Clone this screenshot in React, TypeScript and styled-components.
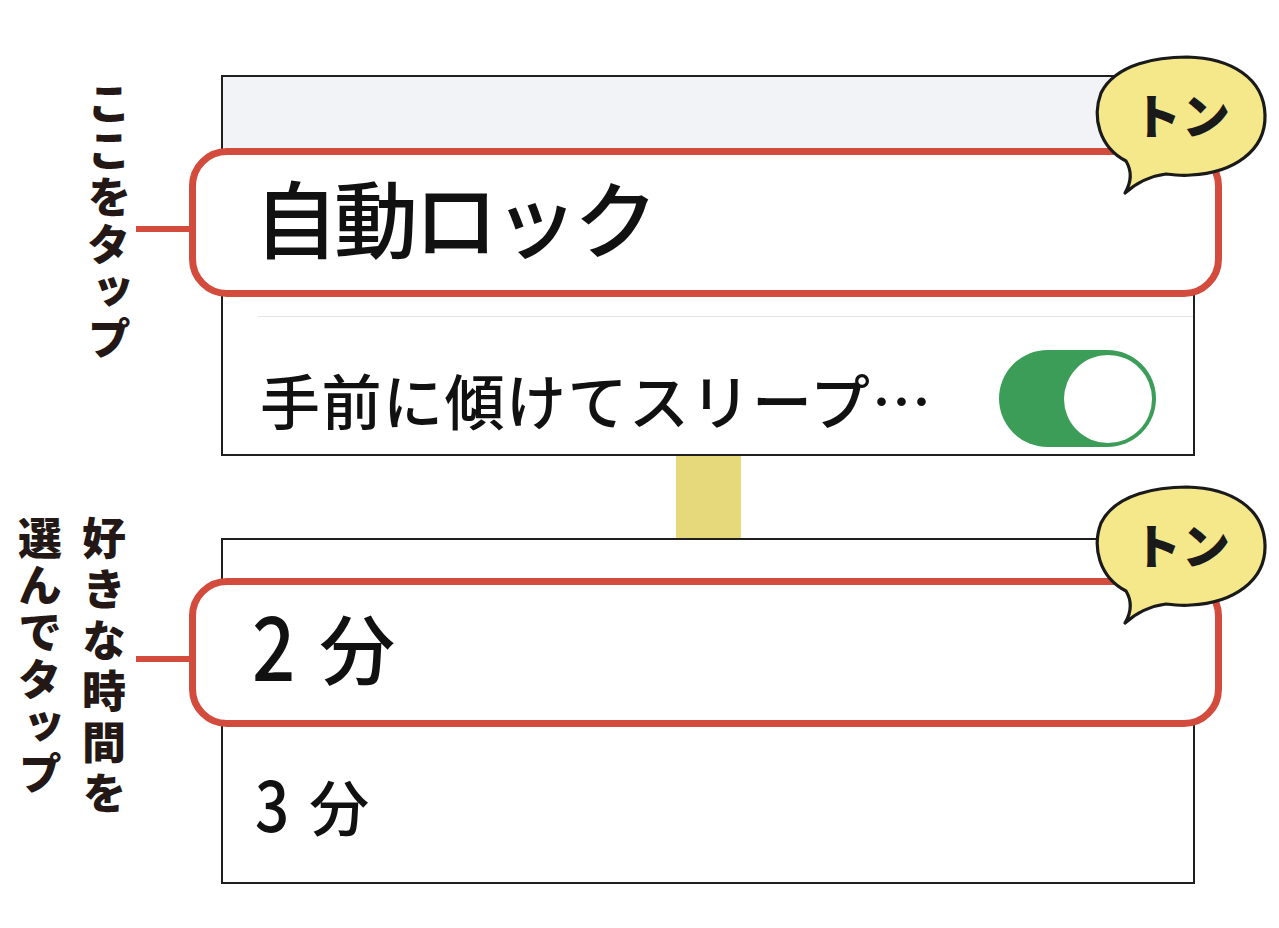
import React from "react";
import styled, { createGlobalStyle } from "styled-components";

const GlobalStyle = createGlobalStyle`
  html, body { margin: 0; padding: 0; background: #ffffff; }
  body {
    font-family: "Noto Sans CJK JP", "Noto Sans", sans-serif;
    color: #111111;
  }
`;

const RED = "#d24b3d";

const Page = styled.main`
  width: 1279px;
  height: 928px;
  box-sizing: border-box;
  padding-top: 75px;
  display: flex;
  flex-direction: column;
  overflow: hidden;
`;

const Step = styled.section`
  display: grid;
  grid-template-columns: 221px 974px;
  align-items: start;
`;

const Label = styled.div<{ $left: number; $top: number }>`
  writing-mode: vertical-rl;
  font-weight: 800;
  font-size: 44px;
  line-height: 64px;
  color: #231815;
  margin-left: ${(p) => p.$left}px;
  margin-top: ${(p) => p.$top}px;
  justify-self: start;
`;

const LabelLine = styled.span<{ $spacing: number }>`
  display: block;
  letter-spacing: ${(p) => p.$spacing}px;
`;

const Panel = styled.div`
  border: 2px solid #1f1f1f;
  background: #ffffff;
  display: flex;
  flex-direction: column;
`;

const Header = styled.div`
  height: 71px;
  background: #f2f3f7;
`;

const Gap = styled.div<{ $h: number }>`
  height: ${(p) => p.$h}px;
`;

const Highlight = styled.div<{ $pad: number }>`
  position: relative;
  height: 149px;
  box-sizing: border-box;
  margin: 0 -29px 0 -34px;
  border: 7px solid ${RED};
  border-radius: 38px;
  background: #ffffff;
  display: flex;
  align-items: center;
  padding-left: ${(p) => p.$pad}px;
  padding-bottom: 14px;

  &::before {
    content: "";
    position: absolute;
    left: -60px;
    width: 54px;
    height: 6px;
    top: calc(50% + 3px);
    background: ${RED};
  }
`;

const BigText = styled.span<{ $size: number; $spacing: number }>`
  font-size: ${(p) => p.$size}px;
  letter-spacing: ${(p) => p.$spacing}px;
  line-height: 1;
  font-weight: 500;
  color: #111111;
  white-space: nowrap;
`;

const Digit = styled.span<{ $scale: number }>`
  display: inline-block;
  transform: scaleY(${(p) => p.$scale});
  transform-origin: 50% 80%;
`;

const Unit = styled.span<{ $gap: number }>`
  margin-left: ${(p) => p.$gap}px;
`;

const Row = styled.div<{ $h: number; $padTop: number; $padLeft: number }>`
  height: ${(p) => p.$h}px;
  box-sizing: border-box;
  display: flex;
  align-items: center;
  justify-content: space-between;
  padding: ${(p) => p.$padTop}px 37px 0 ${(p) => p.$padLeft}px;
`;

const Separator = styled.div`
  height: 1px;
  margin-left: 35px;
  background: #e4e4e6;
`;

const Toggle = styled.div`
  width: 157px;
  height: 97px;
  border-radius: 49px;
  background: #3c9d58;
  display: flex;
  align-items: center;
  justify-content: flex-end;
  padding-right: 4px;
  box-sizing: border-box;
`;

const Knob = styled.div`
  width: 88px;
  height: 88px;
  border-radius: 50%;
  background: #ffffff;
`;

const Connector = styled.div`
  margin-left: 221px;
  width: 974px;
  display: flex;
  justify-content: center;
`;

const ConnectorBar = styled.div`
  width: 65px;
  height: 82px;
  background: #e5d97b;
`;

const Bubble = styled.div`
  position: absolute;
  right: -56px;
  top: -102px;
  width: 182px;
  height: 147px;
`;

const BubbleText = styled.span`
  position: absolute;
  left: 0;
  top: 0;
  width: 182px;
  height: 120px;
  display: flex;
  align-items: center;
  justify-content: center;
  font-weight: 900;
  font-size: 48px;
  letter-spacing: 1px;
  color: #1a1a1a;
  padding-left: 4px;
  box-sizing: border-box;
`;

function TonBubble() {
  return (
    <Bubble>
      <svg width="182" height="147" viewBox="0 0 182 147">
        <path
          d="M36,140 Q46,123 37,108 C10,94 3,64 12,40 C27,10 70,4 98,4 C142,5 175,25 176,62 C177,98 144,120 102,122 C93,123 85,122 77,121 Q54,124 36,140 Z"
          fill="#f5e88b"
          stroke="#1a1a1a"
          strokeWidth="3.2"
          strokeLinejoin="round"
        />
      </svg>
      <BubbleText>トン</BubbleText>
    </Bubble>
  );
}

export default function App() {
  return (
    <>
      <GlobalStyle />
      <Page>
        <Step>
          <Label $left={77} $top={6}>
            <LabelLine $spacing={3}>ここをタップ</LabelLine>
          </Label>
          <Panel>
            <Header />
            <Highlight $pad={58}>
              <BigText $size={84} $spacing={-4}>自動ロック</BigText>
              <TonBubble />
            </Highlight>
            <Gap $h={19} />
            <Separator />
            <Row $h={137} $padTop={26} $padLeft={37}>
              <BigText $size={60} $spacing={1.5}>手前に傾けてスリープ…</BigText>
              <Toggle>
                <Knob />
              </Toggle>
            </Row>
          </Panel>
        </Step>

        <Connector>
          <ConnectorBar />
        </Connector>

        <Step>
          <Label $left={8} $top={-22}>
            <LabelLine $spacing={7}>好きな時間を</LabelLine>
            <LabelLine $spacing={3}>選んでタップ</LabelLine>
          </Label>
          <Panel>
            <Gap $h={38} />
            <Highlight $pad={56}>
              <BigText $size={76} $spacing={0}>
                <Digit $scale={1.18}>2</Digit>
                <Unit $gap={24}>分</Unit>
              </BigText>
              <TonBubble />
            </Highlight>
            <Row $h={155} $padTop={0} $padLeft={32}>
              <BigText $size={60} $spacing={0}>
                <Digit $scale={1.18}>3</Digit>
                <Unit $gap={20}>分</Unit>
              </BigText>
            </Row>
          </Panel>
        </Step>
      </Page>
    </>
  );
}
